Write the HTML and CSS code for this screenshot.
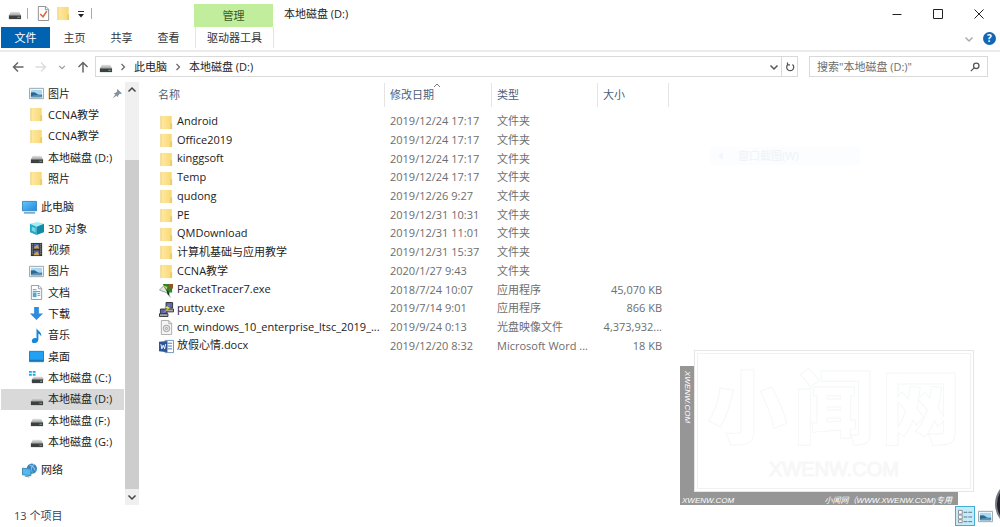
FILE: index.html
```html
<!DOCTYPE html>
<html lang="zh-CN">
<head>
<meta charset="utf-8">
<title>本地磁盘 (D:)</title>
<link rel="stylesheet" href="styles.css">
</head>
<body>
<svg class="defs" aria-hidden="true">
  <linearGradient id="gFolder"><stop offset="0" stop-color="#ffe9a2"/><stop offset="1" stop-color="#f9d978"/></linearGradient>
  <linearGradient id="gDrive" x2="0" y2="1"><stop offset="0" stop-color="#e8e8e8"/><stop offset="1" stop-color="#a0a0a0"/></linearGradient>
  <linearGradient id="gBlue" x2="1" y2="1"><stop offset="0" stop-color="#6ac4f7"/><stop offset="1" stop-color="#1b8ae0"/></linearGradient>
  <symbol id="folder" viewBox="0 0 16 16"><path d="M2 1h11v14H2z" fill="url(#gFolder)"/><path d="M2 1v14M13 9v6" stroke="#edcb6b" fill="none"/><path d="M12 9h1V1h.5v8H14v6h-2z" fill="#eccb6c"/></symbol>
  <symbol id="drive" viewBox="0 0 16 16"><path d="M4 6h9l2 4H2z" fill="url(#gDrive)"/><path d="M2 10h13v4H2z" fill="#3c4040"/><path d="M11 11.500h3v1h-3z" fill="#71ad88"/></symbol>
  <symbol id="driveC" viewBox="0 0 16 16"><path d="M5 7h9l2 3H3z" fill="url(#gDrive)"/><path d="M3 10h12v4H3z" fill="#3c4040"/><path d="M12 11.500h2v1h-2z" fill="#8fd1a8"/><path d="M0 1h3v2H0zM4 1h3v2H4zM0 4h3v2H0zM4 4h3v2H4z" fill="#1ba7e6"/></symbol>
  <symbol id="picture" viewBox="0 0 16 16"><path d="M.5 2.500h15v11H.5z" fill="#fff" stroke="#94a2ab"/><path d="M2 4h12v8H2z" fill="#a9d8f4"/><path d="M2 7q4-1 6 1t6 1v3H2z" fill="#2e678e"/><path d="M2 11q5-2 12-1v2H2z" fill="#5c93b5"/></symbol>
  <symbol id="pc" viewBox="0 0 16 16"><path d="M.5 1.500h15v10H.5z" fill="url(#gBlue)" stroke="#3c88bc"/><path d="M6 12h4v1H6z" fill="#bfe0f5"/><path d="M2 13h12v1.500H2z" fill="#5b9cc5"/></symbol>
  <symbol id="cube" viewBox="0 0 16 16"><path d="M1 3l8-2 7 2-8 3z" fill="#a3edf5"/><path d="M1 3l7 3v9l-7-3z" fill="#25aac4"/><path d="M8 6l8-3v9l-8 3z" fill="#128bab"/><path d="M3 6l4 1.500V12l-4-1.500z" fill="#72d8e7"/></symbol>
  <symbol id="video" viewBox="0 0 16 16"><path d="M2 1h12v14H2z" fill="#333"/><path d="M5 2h6v5H5z" fill="#5364a2"/><path d="M5 9h6v5H5z" fill="#5364a2"/><path d="M6 5l3-2 2 4H5zM6 12l3-2 2 4H5z" fill="#c9a74f"/><path d="M3.500 2v12M12.500 2v12" stroke="#bbb" stroke-dasharray="1 1"/></symbol>
  <symbol id="doc" viewBox="0 0 16 16"><path d="M2.500.5h8l3 3v12h-11z" fill="#fff" stroke="#8d9ba5"/><path d="M10 1v3h3" fill="none" stroke="#8d9ba5"/><path d="M4 5h4M4 7h8M9 9h3M9 11h3" stroke="#3ba2d8"/><path d="M4 8h4v5H4z" fill="#57a6d1"/></symbol>
  <symbol id="down" viewBox="0 0 16 16"><path d="M5.500 1h5v7H15l-7 7-7-7h4.500z" fill="#2c8de0"/></symbol>
  <symbol id="music" viewBox="0 0 16 16"><path d="M8 0c1 3 6 4 5 9-1-2-2-3-3-3V12c0 5-7 5-7 2s3-4 5-3V0z" fill="#1787d9"/></symbol>
  <symbol id="desktop" viewBox="0 0 16 16"><path d="M.5 2.500h15v11H.5z" fill="#22a0f2" stroke="#197bbd"/><path d="M1 12h14" stroke="#1268a5"/></symbol>
  <symbol id="network" viewBox="0 0 16 16"><circle cx="10.500" cy="6" r="5.500" fill="#3b86be"/><path d="M8 2q5 1 6 6M13 1q-5 5-2 9" stroke="#a2d4ef" fill="none"/><path d="M.5 5.500l9 1v7l-9-1z" fill="#52b9ee" stroke="#3b84b1"/><path d="M3 14l5 1" stroke="#668fa8"/></symbol>
  <symbol id="tracer" viewBox="0 0 16 16"><path d="M.5 7.500L5 3l5 8-3-1z" fill="#e3e8e1" stroke="#999"/><path d="M4 1h10v9H9z" fill="#25863a"/><path d="M10 1h5v5h-5z" fill="#8d5826"/><path d="M8 7l3 3v3l2 3-4-4z" fill="#123d1b"/><path d="M5 3l4 1-1 3z" fill="#b8dc52"/></symbol>
  <symbol id="putty" viewBox="0 0 16 16"><path d="M7.500.5h7v6h-7zM1.500 7.500h7v5h-7z" fill="#5867bd" stroke="#333"/><path d="M6.500 7.500h9v3h-7M.5 12.500h9v3h-9z" fill="#aaa" stroke="#333"/><path d="M12 2L6 6l3 1-5 5 8-6-3-1z" fill="#ffef30" stroke="#8a8430" stroke-width=".4"/></symbol>
  <symbol id="iso" viewBox="0 0 16 16"><path d="M2.500.5h8l3 3v12h-11z" fill="#f5f5f5" stroke="#aaa"/><path d="M10.500 1v3h3" fill="none" stroke="#aaa"/><circle cx="8" cy="9" r="3.500" fill="#e1e1e1" stroke="#a3a3a3"/><circle cx="8" cy="9" r="1" fill="#fff" stroke="#999"/></symbol>
  <symbol id="word" viewBox="0 0 16 16"><path d="M6.500 1.500h9v13h-9z" fill="#fff" stroke="#6e8fbd"/><path d="M9 4.500h5M9 7.500h5M9 10.500h5" stroke="#4b74ae"/><path d="M0 3l9-1v12l-9-1z" fill="#2b579a"/><path d="M2 5.500l1 5 1.500-4 1.500 4 1-5" fill="none" stroke="#fff"/></symbol>
  <symbol id="chev" viewBox="0 0 10 10"><path d="M1.500 3.500L5 7l3.500-3.500" fill="none" stroke="currentColor" stroke-width="1.500"/></symbol>
  <symbol id="sep" viewBox="0 0 10 10"><path d="M3.500 2l3 3-3 3" fill="none" stroke="#666" stroke-width="1.200"/></symbol>
</svg>
<div class="window">
  <header class="titlebar">
    <div class="quick">
      <svg class="icon"><use href="#drive"/></svg><i class="bar"></i>
      <button class="plain" aria-label="属性"><svg class="icon" viewBox="0 0 16 16"><path d="M2.500.5h8l3 3v12h-11z" fill="#fff" stroke="#8b8b8b"/><path d="M10 1v3h3" fill="none" stroke="#8b8b8b"/><path d="M4.500 8.500l3 3 4-6" fill="none" stroke="#dc6437" stroke-width="1.600"/></svg></button>
      <button class="plain" aria-label="新建文件夹"><svg class="icon"><use href="#folder"/></svg></button>
      <button class="plain" aria-label="自定义快速访问工具栏"><svg class="small" viewBox="0 0 10 10"><path d="M2 2.500h6" stroke="#333"/><path d="M2 5h6L5 8.500z" fill="#222"/></svg></button>
      <i class="bar"></i>
    </div>
    <div class="context">管理</div>
    <h1 class="title">本地磁盘 (D:)</h1>
    <div class="controls">
      <button class="plain" aria-label="最小化"><svg class="ctl" viewBox="0 0 10 10"><path d="M.5 5.500h9"/></svg></button>
      <button class="plain" aria-label="最大化"><svg class="ctl" viewBox="0 0 10 10"><path d="M.5.5h9v9h-9z"/></svg></button>
      <button class="plain" aria-label="关闭"><svg class="ctl" viewBox="0 0 10 10"><path d="M.5.5l9 9M9.500.5l-9 9"/></svg></button>
    </div>
  </header>
  <nav class="tabs">
    <button class="tab file">文件</button>
    <button class="tab">主页</button>
    <button class="tab">共享</button>
    <button class="tab">查看</button>
    <button class="tab tools">驱动器工具</button>
    <div class="help">
      <button class="plain pale" aria-label="展开功能区"><svg class="small"><use href="#chev"/></svg></button>
      <button class="question" aria-label="帮助">?</button>
    </div>
  </nav>
  <div class="navbar">
    <div class="arrows">
      <button class="plain" aria-label="后退"><svg class="arrow" viewBox="0 0 12 12"><path d="M11.500 6H1.500M6 1.500L1.500 6 6 10.500"/></svg></button>
      <button class="plain faint" aria-label="前进"><svg class="arrow" viewBox="0 0 12 12"><path d="M.5 6h10M6 1.500L10.500 6 6 10.500"/></svg></button>
      <button class="plain grey" aria-label="最近位置"><svg class="tiny"><use href="#chev"/></svg></button>
      <button class="plain" aria-label="上移"><svg class="arrow" viewBox="0 0 12 12"><path d="M6 11.500V1.500M1.500 6L6 1.500 10.500 6"/></svg></button>
    </div>
    <div class="address">
      <svg class="icon"><use href="#drive"/></svg>
      <svg class="small"><use href="#sep"/></svg>
      <a href="#pc">此电脑</a>
      <svg class="small"><use href="#sep"/></svg>
      <a href="#d">本地磁盘 (D:)</a>
      <button class="plain drop" aria-label="以前的位置"><svg class="small"><use href="#chev"/></svg></button>
      <button class="plain refresh" aria-label="刷新"><svg class="small thin" viewBox="0 0 12 12"><path d="M3.500 3A4.200 4.200 0 1 0 9 3M3 .5V3.500h3"/></svg></button>
    </div>
    <label class="search">
      <input type="search" placeholder='搜索"本地磁盘 (D:)"' aria-label="搜索">
      <svg class="small thin" viewBox="0 0 12 12"><circle cx="7.500" cy="4.500" r="3.300"/><path d="M5 7L1 11"/></svg>
    </label>
  </div>
  <div class="body">
    <nav class="tree">
      <a class="node" href="#n"><svg class="icon"><use href="#picture"/></svg>图片<svg class="pin" viewBox="0 0 10 10"><path d="M5 1l4 4-1 .5-1-.3L5.500 7v1.500L1.500 4.500H3L4.800 3 4.500 2zM3 6L.5 9.500 4 7z" fill="#8393a0"/></svg></a>
      <a class="node" href="#n"><svg class="icon"><use href="#folder"/></svg>CCNA教学</a>
      <a class="node" href="#n"><svg class="icon"><use href="#folder"/></svg>CCNA教学</a>
      <a class="node" href="#n"><svg class="icon"><use href="#drive"/></svg>本地磁盘 (D:)</a>
      <a class="node" href="#n"><svg class="icon"><use href="#folder"/></svg>照片</a>
      <a class="node root" href="#n"><svg class="icon"><use href="#pc"/></svg>此电脑</a>
      <a class="node" href="#n"><svg class="icon"><use href="#cube"/></svg>3D 对象</a>
      <a class="node" href="#n"><svg class="icon"><use href="#video"/></svg>视频</a>
      <a class="node" href="#n"><svg class="icon"><use href="#picture"/></svg>图片</a>
      <a class="node" href="#n"><svg class="icon"><use href="#doc"/></svg>文档</a>
      <a class="node" href="#n"><svg class="icon"><use href="#down"/></svg>下载</a>
      <a class="node" href="#n"><svg class="icon"><use href="#music"/></svg>音乐</a>
      <a class="node" href="#n"><svg class="icon"><use href="#desktop"/></svg>桌面</a>
      <a class="node" href="#n"><svg class="icon"><use href="#driveC"/></svg>本地磁盘 (C:)</a>
      <a class="node current" href="#n"><svg class="icon"><use href="#drive"/></svg>本地磁盘 (D:)</a>
      <a class="node" href="#n"><svg class="icon"><use href="#drive"/></svg>本地磁盘 (F:)</a>
      <a class="node" href="#n"><svg class="icon"><use href="#drive"/></svg>本地磁盘 (G:)</a>
      <a class="node root" href="#n"><svg class="icon"><use href="#network"/></svg>网络</a>
    </nav>
    <div class="scroll">
      <button class="plain" aria-label="向上滚动"><svg class="small up"><use href="#chev"/></svg></button>
      <div class="thumb"></div>
      <button class="plain" aria-label="向下滚动"><svg class="small"><use href="#chev"/></svg></button>
    </div>
    <main class="files">
      <table>
        <colgroup><col class="c-name"><col class="c-date"><col class="c-type"><col class="c-size"></colgroup>
        <thead><tr><th>名称</th><th><svg class="sort" viewBox="0 0 8 5"><path d="M1 4l3-3 3 3" fill="none" stroke="#777"/></svg>修改日期</th><th>类型</th><th>大小</th></tr></thead>
        <tbody>
          <tr><td><svg class="icon"><use href="#folder"/></svg>Android</td><td>2019/12/24 17:17</td><td>文件夹</td><td></td></tr>
          <tr><td><svg class="icon"><use href="#folder"/></svg>Office2019</td><td>2019/12/24 17:17</td><td>文件夹</td><td></td></tr>
          <tr><td><svg class="icon"><use href="#folder"/></svg>kinggsoft</td><td>2019/12/24 17:17</td><td>文件夹</td><td></td></tr>
          <tr><td><svg class="icon"><use href="#folder"/></svg>Temp</td><td>2019/12/24 17:17</td><td>文件夹</td><td></td></tr>
          <tr><td><svg class="icon"><use href="#folder"/></svg>qudong</td><td>2019/12/26 9:27</td><td>文件夹</td><td></td></tr>
          <tr><td><svg class="icon"><use href="#folder"/></svg>PE</td><td>2019/12/31 10:31</td><td>文件夹</td><td></td></tr>
          <tr><td><svg class="icon"><use href="#folder"/></svg>QMDownload</td><td>2019/12/31 11:01</td><td>文件夹</td><td></td></tr>
          <tr><td><svg class="icon"><use href="#folder"/></svg>计算机基础与应用教学</td><td>2019/12/31 15:37</td><td>文件夹</td><td></td></tr>
          <tr><td><svg class="icon"><use href="#folder"/></svg>CCNA教学</td><td>2020/1/27 9:43</td><td>文件夹</td><td></td></tr>
          <tr><td><svg class="icon"><use href="#tracer"/></svg>PacketTracer7.exe</td><td>2018/7/24 10:07</td><td>应用程序</td><td>45,070 KB</td></tr>
          <tr><td><svg class="icon"><use href="#putty"/></svg>putty.exe</td><td>2019/7/14 9:01</td><td>应用程序</td><td>866 KB</td></tr>
          <tr><td><svg class="icon"><use href="#iso"/></svg>cn_windows_10_enterprise_ltsc_2019_...</td><td>2019/9/24 0:13</td><td>光盘映像文件</td><td>4,373,932...</td></tr>
          <tr><td><svg class="icon"><use href="#word"/></svg>放假心情.docx</td><td>2019/12/20 8:32</td><td>Microsoft Word ...</td><td>18 KB</td></tr>
        </tbody>
      </table>
    </main>
  </div>
  <footer class="status">
    <span>13 个项目</span>
    <div class="views">
      <button class="view on" aria-label="详细信息"><svg class="icon" viewBox="0 0 16 16"><path d="M.5 1.500h4v4h-4zM.5 6.500h4v4h-4zM.5 11.500h4v3h-4z" fill="#fff" stroke="#8b8b8b"/><path d="M6 3.500h4M11 3.500h4M6 8.500h4M11 8.500h4M6 13.500h4M11 13.500h4" stroke="#5a7185"/></svg></button>
      <button class="view" aria-label="大图标"><svg class="icon"><use href="#picture"/></svg></button>
    </div>
  </footer>
  <div class="ghost"><svg class="small" viewBox="0 0 10 10"><path d="M7 1v8L2 5z" fill="#f1f6fc"/></svg>窗口截图(W)</div>
  <div class="stamp">
    <div class="side">XWENW.COM</div>
    <div class="card"><div class="plate"><div class="big"><span>小</span><span>闻</span><span>网</span></div><div class="site">XWENW.COM</div></div></div>
    <div class="foot"><span>XWENW.COM</span><span>小闻网（WWW.XWENW.COM)专用</span></div>
  </div>
  <div class="orb"></div>
</div>
</body>
</html>
```
FILE: styles.css
```css
* { box-sizing: border-box; }
body { margin: 0; background: #fff; color: #222; font: 11px/16px "Open Sans", "Noto Sans CJK SC", sans-serif; }
a { color: inherit; text-decoration: none; }
button, input { font: inherit; color: inherit; }
.defs { position: absolute; width: 0; height: 0; }
.window { position: relative; display: flex; flex-direction: column; height: 100vh; min-height: 520px; overflow: hidden; }
.icon { width: 15px; height: 15px; flex: none; }
.small { width: 10px; height: 10px; flex: none; }
.tiny { width: 8px; height: 8px; flex: none; }
.plain { display: flex; align-items: center; justify-content: center; padding: 0; border: 0; background: none; }
.arrow { width: 12px; height: 12px; flex: none; fill: none; stroke: currentColor; stroke-width: 1.5; }
.thin { fill: none; stroke: currentColor; stroke-width: 1.5; }

.titlebar { display: flex; height: 27px; flex: none; }
.quick { display: flex; align-items: center; gap: 5px; width: 194px; padding-left: 7px; }
.bar { width: 1px; height: 11px; margin-right: 3px; background: #aaa; }
.context { width: 79px; margin-top: 4px; background: #c0ee9d; color: #3a5a2c; text-align: center; line-height: 23px; }
.title { flex: 1; margin: 0; padding-left: 11px; font-size: 11px; font-weight: 400; line-height: 28px; }
.controls { display: flex; padding-right: 1px; }
.controls .plain { width: 41px; }
.ctl { width: 10px; height: 10px; fill: none; stroke: #222; }

.tabs { display: flex; flex: none; height: 25px; border-bottom: 2px solid #ebebeb; }
.tab { width: 47px; height: 21px; padding: 0; border: 0; background: none; color: #333; text-align: center; }
.file { width: 49px; margin: 0 1px; background: #0063b1; color: #fff; }
.tools { width: 79px; margin-left: 3px; border: solid #e0e8da; border-width: 0 1px; }
.help { display: flex; align-items: center; gap: 9px; margin-left: auto; padding-right: 4px; }
.pale { color: #aaa; }
.question { width: 13px; height: 13px; padding: 0; border: 0; border-radius: 50%; background: #1166b5; color: #fff; font-size: 10px; font-weight: 700; line-height: 13px; }

.navbar { display: flex; flex: none; height: 30px; padding: 4px 12px 5px 0; }
.arrows { display: flex; align-items: center; justify-content: space-between; width: 95px; padding: 0 6px 0 12px; color: #666; }
.faint { color: #ddd; }
.grey { color: #999; }
.address { display: flex; flex: 1; align-items: center; gap: 5px; padding-left: 2px; border: 1px solid #d9d9d9; }
.address a { color: #222; padding: 0 1px; }
.drop { margin-left: auto; color: #555; }
.refresh { align-self: stretch; width: 16px; margin-left: -3px; border-left: 1px solid #d9d9d9; color: #555; }
.search { display: flex; align-items: center; width: 179px; margin-left: 11px; padding: 0 7px; border: 1px solid #d9d9d9; color: #555; }
.search input { flex: 1; min-width: 0; padding: 0; border: 0; outline: 0; background: none; }
.search input::placeholder { color: #6d6d6d; opacity: 1; }

.body { display: flex; flex: 1; min-height: 0; }
.tree { display: flex; flex-direction: column; width: 125px; padding: 1px 1px 24px; }
.node { display: flex; flex: 1; align-items: center; gap: 4px; max-height: 22px; padding-left: 28px; white-space: nowrap; }
.root { margin-top: 7px; padding-left: 21px; }
.current { background: #d9d9d9; }
.pin { width: 11px; height: 11px; margin-left: auto; margin-right: 1px; }
.scroll { display: flex; flex-direction: column; width: 14px; background: #f0f0f0; color: #444; }
.scroll .plain { height: 16px; }
.up { transform: rotate(180deg); }
.thumb { flex: 1; margin-top: 62px; background: #cdcdcd; }

.files { flex: 1; min-width: 0; padding: 1px 0 0 12px; }
table { table-layout: fixed; width: 518px; height: 272px; border-collapse: collapse; }
.c-name { width: 234px; }
.c-date { width: 107px; }
.c-type { width: 106px; }
.c-size { width: 71px; }
th, td { padding: 0 5px; text-align: left; white-space: nowrap; }
th { position: relative; height: 29px; padding-bottom: 5px; background: linear-gradient(#e4e4e4, #e4e4e4) right top / 1px 24px no-repeat; color: #4c607a; font-weight: 400; }
th:first-child { padding-left: 7px; }
.sort { position: absolute; top: 0; left: 48px; width: 8px; height: 5px; }
td { color: #6d6d6d; }
td:first-child { padding-left: 8px; color: #222; }
td:last-child { padding-right: 7px; text-align: right; }
td .icon { margin-right: 3px; vertical-align: middle; }

.status { display: flex; align-items: center; flex: none; height: 22px; padding: 0 5px 0 14px; color: #33475f; }
.views { display: flex; align-items: center; margin-left: auto; }
.view { display: flex; align-items: center; justify-content: center; width: 20px; height: 20px; padding: 0; border: 0; background: none; }
.on { border: 1px solid #45acd6; background: #c4ebfa; }

.ghost { position: absolute; top: 147px; right: 140px; display: flex; align-items: center; gap: 12px; width: 150px; height: 18px; padding-left: 6px; background: #fbfdff; color: #eff3f7; }
.stamp { position: absolute; right: 26px; bottom: 22px; display: grid; grid-template-columns: 14px 1fr; width: 294px; color: #fff; font: italic 8px/13px "Liberation Sans", "Noto Sans CJK SC", sans-serif; }
.side { margin-top: 16px; padding-top: 5px; background: #969696; writing-mode: vertical-rl; line-height: 14px; }
.card { padding: 2px; border: 1px solid #e6e6e6; background: #fff; }
.plate { height: 136px; padding-top: 12px; border: 1px solid #f1f1f1; font-style: normal; text-align: center; }
.big { display: flex; justify-content: space-around; padding: 0 6px; font: 900 80px/88px "Liberation Sans", "Noto Sans CJK SC", sans-serif; -webkit-text-stroke: 1px #f5f8f7; }
.site { margin-top: 3px; color: #f9f9f9; font: 20px/24px "Liberation Sans", sans-serif; -webkit-text-stroke: 1px #f7f7f7; }
.foot { display: flex; grid-column: 1 / 3; justify-content: space-between; height: 13px; margin-right: 16px; padding: 0 6px 0 2px; background: #969696; line-height: 17px; }
.orb { position: absolute; right: -45px; bottom: -2px; width: 50px; height: 50px; border: 2px solid #777a85; border-radius: 50%; background: #20212b; }
```
